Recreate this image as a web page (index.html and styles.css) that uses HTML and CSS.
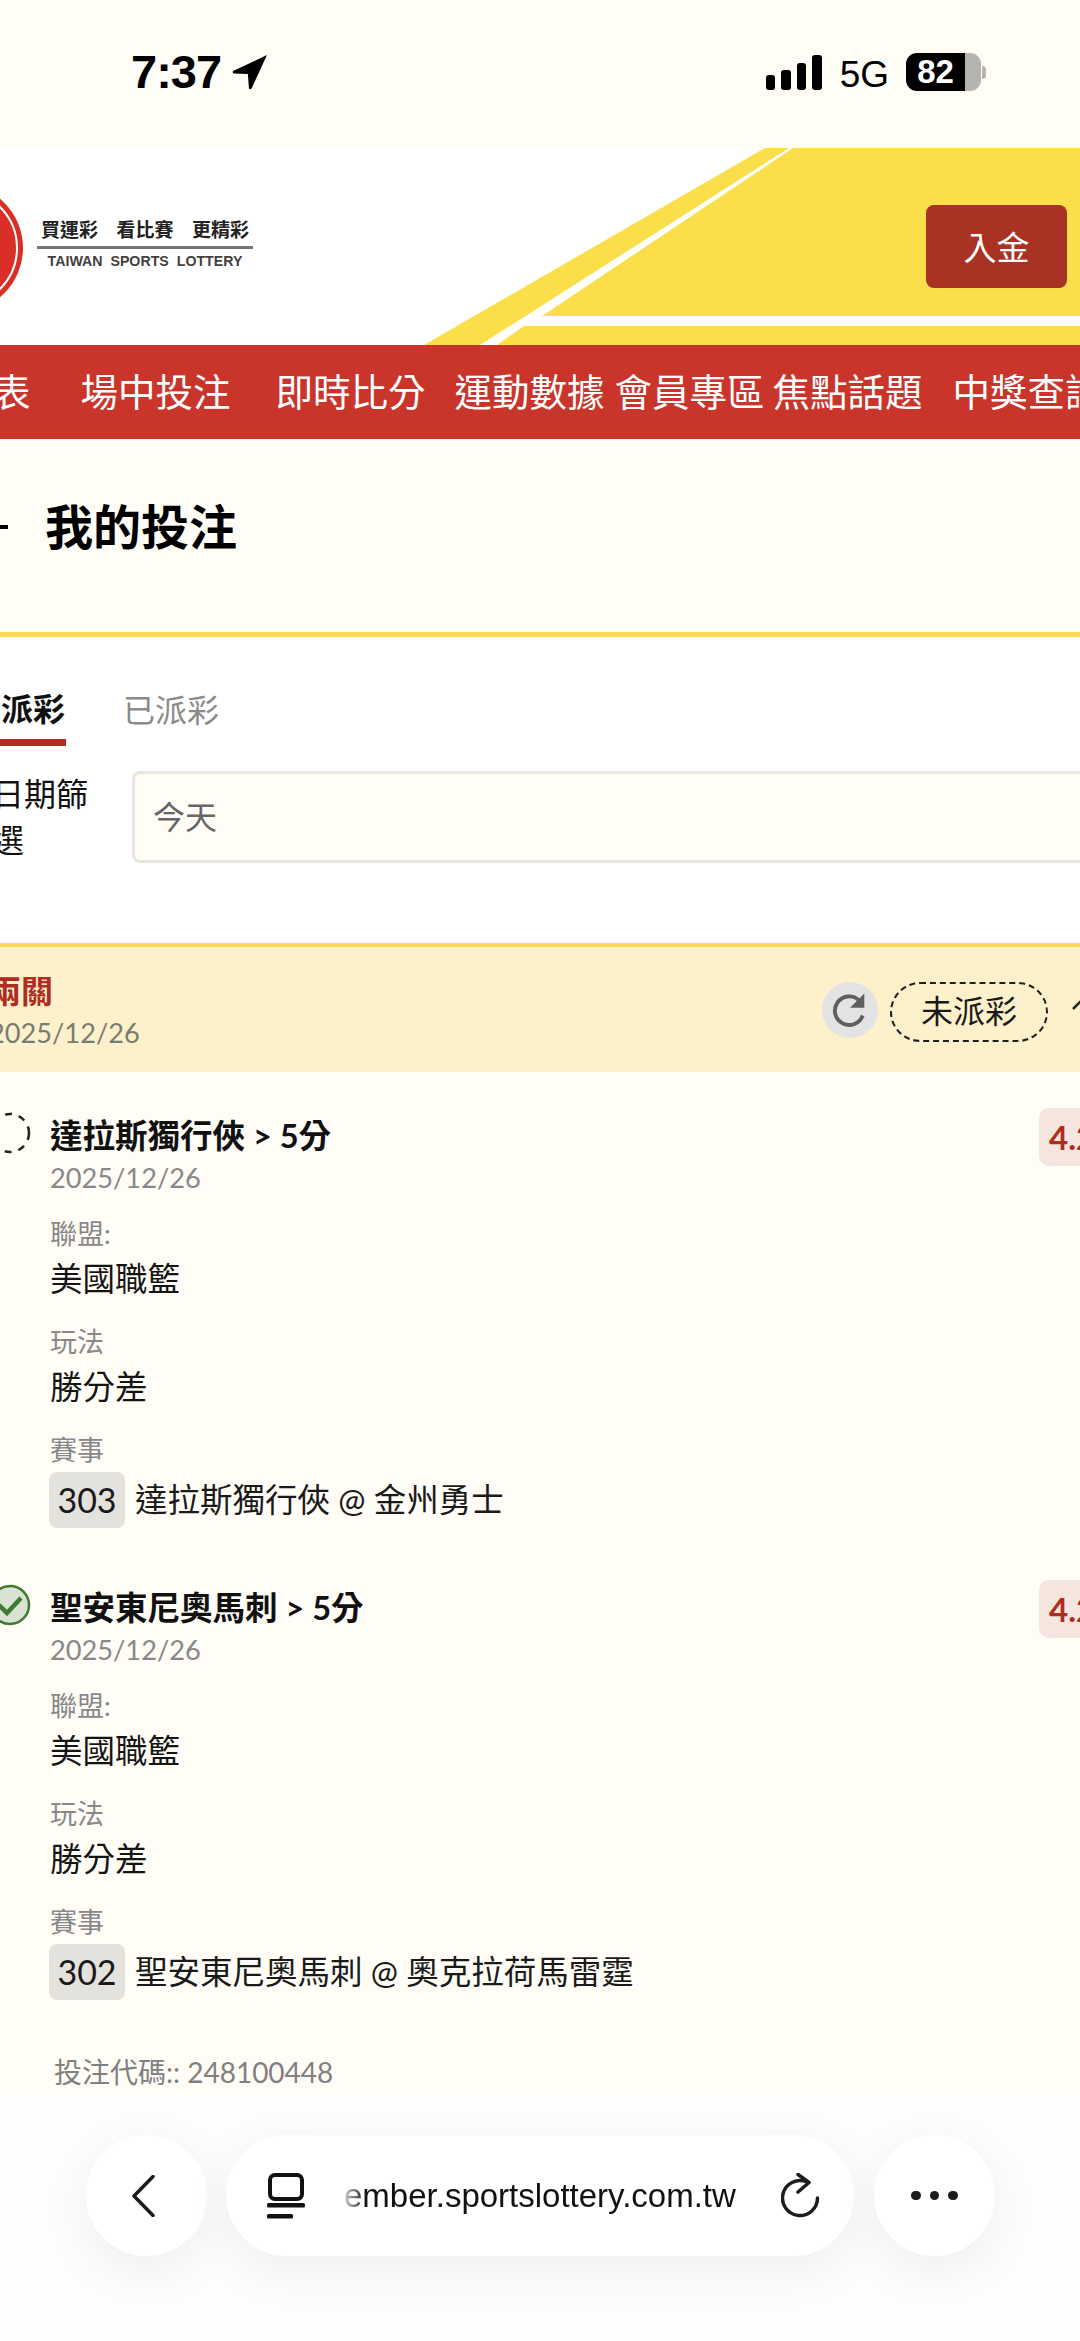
FILE: index.html
```html
<!DOCTYPE html>
<html lang="zh-Hant">
<head>
<meta charset="utf-8">
<title>我的投注</title>
<link rel="stylesheet" href="styles.css">
</head>
<body>
<div class="screen">
  <div class="status">
    <span class="time">7:37</span>
    <svg class="loc" viewBox="0 0 34 34"><path d="M33 1 L1 16 Q0 18 2 18.500 L15 19 L16 32.500 Q17 34 18.500 32.500 Z" fill="#000"/></svg>
    <div class="status-right">
      <div class="signal"><i class="b1"></i><i class="b2"></i><i class="b3"></i><i class="b4"></i></div>
      <span class="net">5G</span>
      <div class="battery"><span class="battery-fill">82</span><span class="battery-rest"></span></div>
      <span class="battery-nub"></span>
    </div>
  </div>

  <header class="site-head">
    <svg class="head-art" viewBox="0 0 1080 197">
      <polygon points="765,0 789,0 480,197 424,197" fill="#fadf4a"/>
      <polygon points="793,0 1080,0 1080,168 542,168" fill="#fadf4a"/>
      <polygon points="524,178 1080,178 1080,197 497,197" fill="#fadf4a"/>
      <circle cx="-41" cy="100" r="64" fill="#d92f28"/>
      <circle cx="-41" cy="100" r="58" fill="none" stroke="#fff" stroke-width="2"/>
    </svg>
    <div class="logo">
      <div class="slogan"><span>買運彩</span><span>看比賽</span><span>更精彩</span></div>
      <div class="logo-en">TAIWAN SPORTS LOTTERY</div>
    </div>
    <button class="deposit">入金</button>
  </header>

  <nav class="nav">
    <span class="nav-a">表</span>
    <span class="nav-b">場中投注</span>
    <span class="nav-c">即時比分</span>
    <span class="nav-d">運動數據</span>
    <span class="nav-e">會員專區</span>
    <span class="nav-f">焦點話題</span>
    <span>中獎查詢</span>
  </nav>

  <div class="page-title">
    <span class="back-tail"></span>
    <h1>我的投注</h1>
  </div>

  <section class="filters">
    <div class="tabs">
      <span class="tab tab-on">未派彩</span>
      <span class="tab">已派彩</span>
    </div>
    <div class="date-row">
      <label class="date-label">日期篩選</label>
      <div class="date-input">今天</div>
    </div>
  </section>

  <section class="card-head">
    <div class="card-info">
      <div class="card-name">兩關</div>
      <div class="card-date">2025/12/26</div>
    </div>
    <div class="refresh">
      <svg viewBox="0 0 40 40"><path d="M31.500 25 A13 13 0 1 1 28 11" fill="none" stroke="#5f5f5f" stroke-width="3.500"/><polygon points="33,5 33,18 20,18" fill="#5f5f5f"/></svg>
    </div>
    <div class="state">未派彩</div>
    <svg class="chevron" viewBox="0 0 14 14"><path d="M1 12 L9 4 L17 12" fill="none" stroke="#222" stroke-width="2.500"/></svg>
  </section>

  <main class="card-body">
    <article class="bet">
      <svg class="mark" viewBox="0 0 42 42"><circle cx="21" cy="21" r="19" fill="none" stroke="#222" stroke-width="2.500" stroke-dasharray="7 7"/></svg>
      <div class="bet-main">
        <div class="bet-title">達拉斯獨行俠 &gt; 5分</div>
        <div class="bet-date">2025/12/26</div>
        <div class="field-label label-first">聯盟:</div>
        <div class="field-value">美國職籃</div>
        <div class="field-label">玩法</div>
        <div class="field-value">勝分差</div>
        <div class="field-label">賽事</div>
        <div class="match"><span class="match-no">303</span><span>達拉斯獨行俠 @ 金州勇士</span></div>
      </div>
      <div class="odds">4.20</div>
    </article>
    <article class="bet">
      <svg class="mark" viewBox="0 0 42 42"><circle cx="21" cy="21" r="19" fill="#d9e3d3" stroke="#3f7a33" stroke-width="2.500"/><path d="M10 21 L18 29 L32 14" fill="none" stroke="#3f7a33" stroke-width="4.500"/></svg>
      <div class="bet-main">
        <div class="bet-title">聖安東尼奧馬刺 &gt; 5分</div>
        <div class="bet-date">2025/12/26</div>
        <div class="field-label label-first">聯盟:</div>
        <div class="field-value">美國職籃</div>
        <div class="field-label">玩法</div>
        <div class="field-value">勝分差</div>
        <div class="field-label">賽事</div>
        <div class="match"><span class="match-no">302</span><span>聖安東尼奧馬刺 @ 奧克拉荷馬雷霆</span></div>
      </div>
      <div class="odds">4.20</div>
    </article>
    <div class="bet-code">投注代碼:: 248100448</div>
  </main>

  <footer class="browser-bar">
    <div class="pill pill-round">
      <svg class="ico-back" viewBox="0 0 24 42"><path d="M22 1.500 L3 21 L22 40.500" fill="none" stroke="#1c1c1c" stroke-width="3.500" stroke-linejoin="round" stroke-linecap="round"/></svg>
    </div>
    <div class="pill pill-url">
      <svg class="ico-tabs" viewBox="0 0 38 46"><rect x="3" y="2" width="32" height="24" rx="5" fill="none" stroke="#111" stroke-width="4"/><rect x="0" y="30" width="38" height="4.500" rx="1.500" fill="#111"/><rect x="0" y="41" width="26" height="4.500" rx="1.500" fill="#111"/></svg>
      <span class="url">ember.sportslottery.com.tw</span>
      <svg class="ico-reload" viewBox="0 0 40 46"><path d="M26 9 A17.500 17.500 0 1 0 36.500 25" fill="none" stroke="#1c1c1c" stroke-width="3.500" stroke-linecap="round"/><path d="M17 1.500 L28 9.500 L17 19" fill="none" stroke="#1c1c1c" stroke-width="3.500" stroke-linecap="round" stroke-linejoin="round"/></svg>
    </div>
    <div class="pill pill-round">
      <span class="dots"><i></i><i></i><i></i></span>
    </div>
  </footer>
</div>
</body>
</html>
```

FILE: styles.css
```css
* { box-sizing: border-box; }
html, body { margin: 0; padding: 0; }
body {
  background: #fffdf6;
  font-family: Lato, "Noto Sans CJK TC", sans-serif;
  color: #111;
}
.screen {
  width: 1080px;
  height: 2341px;
  overflow: hidden;
  display: flex;
  flex-direction: column;
  background: #fffdf6;
}

/* status bar */
.status {
  height: 148px;
  flex: none;
  display: flex;
  align-items: flex-start;
  padding: 46px 94px 0 131px;
}
.time {
  font: 700 47px/52px "Liberation Sans", sans-serif;
  letter-spacing: -1px;
  color: #000;
}
.loc { width: 36px; height: 36px; margin: 8px 0 0 11px; }
.status-right { margin-left: auto; display: flex; align-items: flex-start; padding-top: 7px; }
.signal { display: flex; align-items: flex-end; gap: 6px; height: 35px; margin-top: 2px; }
.signal i { display: block; width: 9.500px; background: #000; border-radius: 3px; }
.b1 { height: 15px; }
.b2 { height: 20px; }
.b3 { height: 27px; }
.b4 { height: 35px; }
.net {
  font: 400 37px/38px "Liberation Sans", sans-serif;
  margin-left: 18px;
  margin-top: 3px;
  color: #000;
}
.battery { display: flex; width: 75px; height: 38px; margin-left: 17px; border-radius: 11px; overflow: hidden; }
.battery-fill {
  width: 59px;
  background: #000;
  color: #fff;
  text-align: center;
  font: 700 33px/38px "Liberation Sans", sans-serif;
}
.battery-rest { flex: 1; background: #b4b3ad; }
.battery-nub { width: 4px; height: 13px; margin: 13px 0 0 1px; background: #b4b3ad; border-radius: 0 4px 4px 0; }

/* site header */
.site-head {
  height: 197px;
  flex: none;
  position: relative;
  background: #fff;
  display: flex;
  align-items: flex-start;
}
.head-art { position: absolute; inset: 0; width: 1080px; height: 197px; }
.logo { position: relative; margin: 70px 0 0 37px; width: 216px; }
.slogan {
  display: flex;
  justify-content: space-between;
  padding: 0 4px;
  font-size: 19px;
  line-height: 24px;
  font-weight: 700;
  color: #222;
  border-bottom: 3px solid #7a7472;
  height: 31px;
}
.logo-en {
  font: 700 14.200px/18px "Liberation Sans", sans-serif;
  color: #443f3d;
  text-align: center;
  word-spacing: 4px;
  margin-top: 3px;
}
.deposit {
  position: relative;
  margin: 57px 13px 0 auto;
  width: 141px;
  height: 83px;
  border: 0;
  border-radius: 8px;
  background: #a83224;
  color: #fff;
  font: 400 33px/1 "Noto Sans CJK TC", sans-serif;
}

/* nav */
.nav {
  height: 94px;
  flex: none;
  background: #c9352b;
  color: #fff;
  display: flex;
  align-items: center;
  margin-left: -7px;
  white-space: nowrap;
  font-size: 37.500px;
  line-height: 94px;
}
.nav-a { margin-right: 50px; }
.nav-b { margin-right: 45px; }
.nav-c { margin-right: 29px; }
.nav-d { margin-right: 10px; }
.nav-e { margin-right: 8px; }
.nav-f { margin-right: 30px; }

/* title */
.page-title {
  height: 198px;
  flex: none;
  display: flex;
  align-items: center;
  border-bottom: 5px solid #fcd858;
  padding-bottom: 17px;
  position: relative;
}
.back-tail { width: 8px; height: 4px; background: #000; margin-right: 37px; }
.page-title h1 { margin: 0; font-size: 48px; line-height: 60px; font-weight: 700; color: #000; }

/* filters */
.filters {
  height: 306px;
  flex: none;
  background: #fff;
  padding-top: 46px;
}
.tabs { display: flex; height: 63px; margin-left: -31px; }
.tab {
  font-size: 32px;
  line-height: 48px;
  color: #8a8a86;
  padding-top: 3px;
}
.tab-on {
  font-weight: 700;
  color: #111;
  padding-top: 2px;
  height: 63px;
  border-bottom: 7px solid #b52b21;
  margin-right: 57px;
  width: 97px;
}
.date-row { display: flex; margin-top: 25px; }
.date-label {
  width: 96px;
  margin-left: -8px;
  margin-right: 44px;
  flex: none;
  font-size: 32px;
  line-height: 46px;
  padding-top: 0;
}
.date-input {
  width: 1000px;
  flex: none;
  height: 92px;
  border: 3px solid #e8e6df;
  border-radius: 8px;
  background: #fffdf6;
  color: #666;
  font-size: 32px;
  line-height: 86px;
  padding-left: 18px;
}

/* card header */
.card-head {
  height: 129px;
  flex: none;
  background: #fcf1cb;
  border-top: 4px solid #fcd858;
  display: flex;
  align-items: flex-start;
  position: relative;
}
.card-info { margin-left: -11px; padding-top: 23px; width: 833px; flex: none; }
.card-name { font-size: 32px; line-height: 42px; font-weight: 700; color: #b02c21; }
.card-date { font-size: 27.200px; line-height: 40px; color: #7b7b70; margin-top: 1px; }
.refresh {
  width: 56px;
  height: 56px;
  flex: none;
  margin-top: 35px;
  border-radius: 50%;
  background: #e3e3e3;
  display: flex;
  align-items: center;
  justify-content: center;
}
.refresh svg { width: 44px; height: 44px; }
.state {
  width: 158px;
  height: 60px;
  flex: none;
  margin: 35px 0 0 12px;
  border: 2.500px dashed #1f1f1f;
  border-radius: 30px;
  text-align: center;
  font-size: 32px;
  line-height: 54px;
  color: #1a1a1a;
}
.chevron { width: 14px; height: 14px; flex: none; margin: 50px 0 0 24px; overflow: visible; }

/* bets */
.card-body {
  flex: 1;
  overflow: hidden;
  padding-top: 36px;
  min-height: 0;
}
.bet { display: flex; align-items: flex-start; width: 1200px; margin-left: -11px; margin-bottom: 52px; }
.mark { width: 42px; height: 42px; flex: none; margin-top: 4px; }
.bet-main { width: 989px; flex: none; margin-left: 19px; padding-top: 6px; }
.bet-title { font-size: 32.500px; line-height: 44px; font-weight: 700; color: #111; }
.bet-date { font-size: 27.200px; line-height: 39px; color: #888; }
.field-label { font-size: 27px; line-height: 36px; color: #888; margin-top: 24px; }
.label-first { margin-top: 19px; }
.field-value { font-size: 32.500px; line-height: 42px; color: #151515; margin-top: 6px; }
.match { display: flex; align-items: center; gap: 10px; margin-top: 4px; margin-left: -1px; font-size: 32.500px; line-height: 56px; color: #1a1a1a; }
.match-no {
  width: 76px;
  height: 56px;
  border-radius: 8px;
  background: #e4e2dc;
  text-align: center;
  font-size: 34px;
}
.odds {
  flex: none;
  height: 58px;
  padding: 0 10px;
  border-radius: 10px;
  background: #f4e6df;
  color: #b02c21;
  font-size: 33px;
  font-weight: 700;
  line-height: 58px;
}
.bet-code { margin-left: 54px; margin-top: 4px; font-size: 28px; line-height: 40px; color: #808080; }

/* browser bar */
.browser-bar {
  height: 246px;
  flex: none;
  background: #fdfdfd;
  display: flex;
  align-items: flex-start;
  gap: 19px;
  padding: 40px 0 0 86px;
}
.pill {
  height: 121px;
  border-radius: 61px;
  background: #fff;
  box-shadow: 0 14px 50px rgba(0, 0, 0, .06);
  display: flex;
  align-items: center;
  flex: none;
}
.pill-round { width: 121px; justify-content: center; }
.pill-url + .pill-round { margin-left: 1px; }
.ico-back { width: 24px; height: 42px; margin-left: -8px; }
.pill-url { width: 628px; padding-left: 41px; }
.ico-tabs { width: 38px; height: 46px; flex: none; }
.url {
  width: 394px;
  margin-left: 39px;
  flex: none;
  font: 400 33px/40px "Liberation Sans", sans-serif;
  color: #111;
  white-space: nowrap;
  -webkit-mask-image: linear-gradient(90deg, rgba(0,0,0,.2) 0, #000 22px);
  mask-image: linear-gradient(90deg, rgba(0,0,0,.2) 0, #000 22px);
}
.ico-reload { width: 40px; height: 46px; flex: none; margin-left: 43px; }
.dots { display: flex; gap: 9px; }
.dots i { display: block; width: 9.500px; height: 9.500px; border-radius: 50%; background: #1c1c1c; }
```
